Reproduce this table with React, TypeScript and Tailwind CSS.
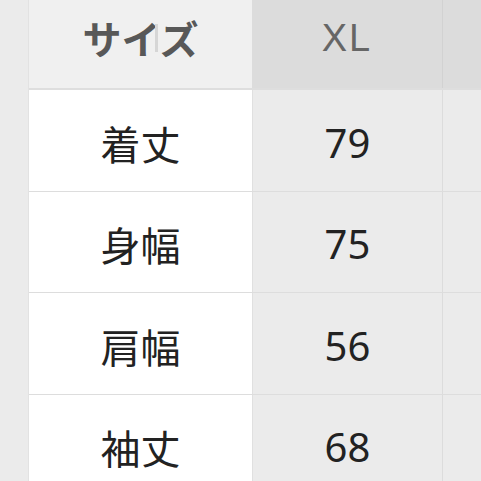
import React from 'react';

const ROWS = [
  { label: '着丈', value: '79' },
  { label: '身幅', value: '75' },
  { label: '肩幅', value: '56' },
  { label: '袖丈', value: '68' },
];

const font = { fontFamily: '"Noto Sans CJK JP", "Noto Sans", sans-serif' };

export default function App() {
  return (
    <div className="flex w-[481px] h-[481px] overflow-hidden bg-[#ebebeb]" style={font}>
      {/* 左側の余白 */}
      <div className="w-[29px] shrink-0 bg-[#ebebeb] border-r border-[#e2e2e2]" />
      <div className="flex-1 flex flex-col">
        {/* ヘッダー行 */}
        <div className="flex h-[90px] shrink-0 border-b-2 border-[#dedede]">
          <div className="relative w-[223px] shrink-0 bg-[#f0f0f0] flex items-center justify-center pb-[14px]">
            <span className="text-[39px] font-bold text-[#585858]">サイズ</span>
            <span className="absolute left-[126px] top-[24px] w-[3px] h-[28px] bg-[#d6d6d6]" />
          </div>
          <div className="w-[191px] shrink-0 bg-[#dcdcdc] border-r border-[#d2d2d2] flex items-center justify-center pb-[12px]">
            <span className="text-[38px] text-[#666666] tracking-[2px]" style={{ fontFamily: '"Liberation Sans", Arial, sans-serif' }}>XL</span>
          </div>
          <div className="flex-1 bg-[#dcdcdc]" />
        </div>
        {ROWS.map((row) => (
          <div key={row.label} className="flex h-[101.5px] shrink-0 border-b border-[#dddddd]">
            <div className="w-[223px] shrink-0 bg-white flex items-center justify-center pt-[5px]">
              <span className="text-[40px] text-[#222222] leading-none">{row.label}</span>
            </div>
            <div className="w-[191px] shrink-0 bg-[#ebebeb] border-l border-[#e0e0e0] border-r border-r-[#dcdcdc] flex items-center justify-center pt-[5px]">
              <span className="text-[40px] text-[#222222] leading-none" style={{ fontFamily: '"Noto Sans", sans-serif' }}>{row.value}</span>
            </div>
            <div className="flex-1 bg-[#ebebeb]" />
          </div>
        ))}
      </div>
    </div>
  );
}
